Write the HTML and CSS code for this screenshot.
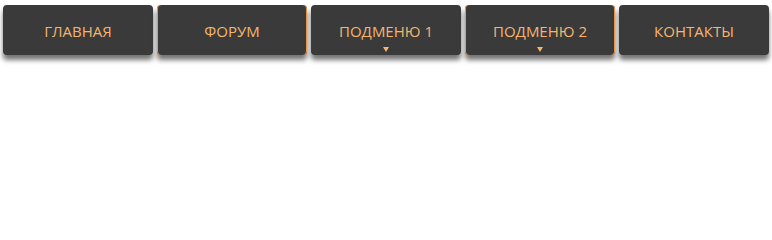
FILE: index.html
```html
<!DOCTYPE html>
<html lang="ru">
<head>
<meta charset="utf-8">
<title>Меню</title>
<link rel="stylesheet" href="styles.css">
</head>
<body>
<nav class="menu">
  <a class="item" href="#">ГЛАВНАЯ</a>
  <a class="item edged" href="#">ФОРУМ</a>
  <a class="item sub" href="#">ПОДМЕНЮ 1<span class="arrow"></span></a>
  <a class="item edged sub" href="#">ПОДМЕНЮ 2<span class="arrow"></span></a>
  <a class="item" href="#">КОНТАКТЫ</a>
</nav>
</body>
</html>
```
FILE: styles.css
```css
html, body {
  margin: 0;
  padding: 0;
  background: #ffffff;
}
.menu {
  display: flex;
  gap: 4px;
  padding: 5px 0 12px 3px;
}
.item {
  position: relative;
  box-sizing: border-box;
  flex: 0 0 150px;
  width: 150px;
  height: 50px;
  background: #3a3a3a;
  border-radius: 4px;
  box-shadow: 0 5px 5px rgba(0, 0, 0, 0.55);
  color: #f5b56f;
  font-family: "Open Sans", "DejaVu Sans", sans-serif;
  font-size: 15px;
  text-decoration: none;
  display: flex;
  align-items: center;
  justify-content: center;
  padding-top: 1px;
}
.edged {
  box-shadow: inset 1px 0 0 #e8984a, inset -1px 0 0 #e8984a, 0 5px 5px rgba(0, 0, 0, 0.55);
}
.arrow {
  position: absolute;
  left: 50%;
  bottom: 3px;
  margin-left: -3px;
  width: 0;
  height: 0;
  border-left: 3px solid transparent;
  border-right: 3px solid transparent;
  border-top: 5px solid #f5b56f;
}
```
